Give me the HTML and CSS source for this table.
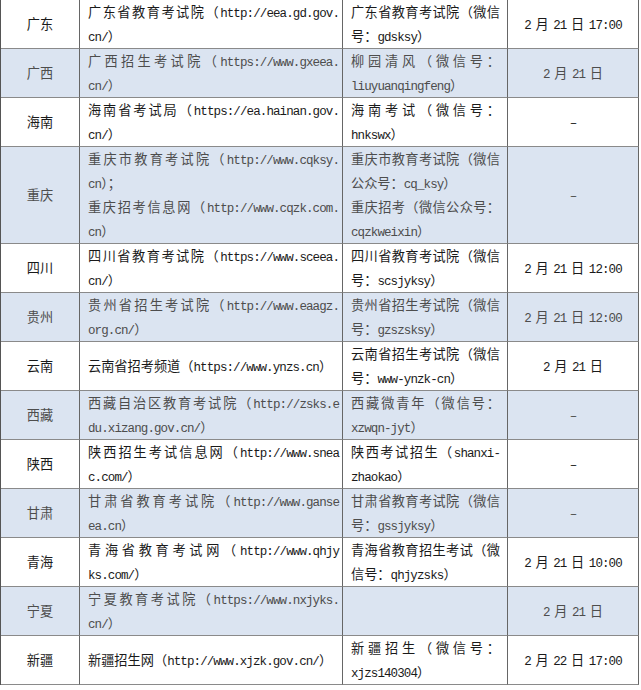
FILE: index.html
```html
<!DOCTYPE html>
<html lang="zh-CN">
<head>
<meta charset="utf-8">
<title>各省招生考试信息</title>
<link rel="stylesheet" href="styles.css">
</head>
<body>
<div class="tbl">
  <div class="row">
    <div class="c c1"><span class="ln">广东</span></div>
    <div class="c c2"><span class="ln j">广东省教育考试院（<span class="e">http://eea.gd.gov.</span></span><span class="ln"><span class="e">cn/</span>）</span></div>
    <div class="c c3"><span class="ln j">广东省教育考试院（微信</span><span class="ln">号：<span class="e">gdsksy</span>）</span></div>
    <div class="c c4"><span class="ln d"><span class="e">2 </span>月<span class="e"> 21 </span>日<span class="e"> 17:00</span></span></div>
  </div>
  <div class="row alt">
    <div class="c c1"><span class="ln">广西</span></div>
    <div class="c c2"><span class="ln j">广西招生考试院（<span class="e">https://www.gxeea.</span></span><span class="ln"><span class="e">cn/</span>）</span></div>
    <div class="c c3"><span class="ln j">柳园清风（微信号：</span><span class="ln"><span class="e">liuyuanqingfeng</span>）</span></div>
    <div class="c c4"><span class="ln d"><span class="e">2 </span>月<span class="e"> 21 </span>日</span></div>
  </div>
  <div class="row">
    <div class="c c1"><span class="ln">海南</span></div>
    <div class="c c2"><span class="ln j">海南省考试局（<span class="e">https://ea.hainan.gov.</span></span><span class="ln"><span class="e">cn/</span>）</span></div>
    <div class="c c3"><span class="ln j">海南考试（微信号：</span><span class="ln"><span class="e">hnkswx</span>）</span></div>
    <div class="c c4"><span class="ln"><span class="e">–</span></span></div>
  </div>
  <div class="row alt">
    <div class="c c1"><span class="ln">重庆</span></div>
    <div class="c c2"><span class="ln j">重庆市教育考试院（<span class="e">http://www.cqksy.</span></span><span class="ln"><span class="e">cn</span>）；</span><span class="ln j">重庆招考信息网（<span class="e">http://www.cqzk.com.</span></span><span class="ln"><span class="e">cn</span>）</span></div>
    <div class="c c3"><span class="ln j">重庆市教育考试院（微信</span><span class="ln">公众号：<span class="e">cq_ksy</span>）</span><span class="ln j">重庆招考（微信公众号：</span><span class="ln"><span class="e">cqzkweixin</span>）</span></div>
    <div class="c c4"><span class="ln"><span class="e">–</span></span></div>
  </div>
  <div class="row">
    <div class="c c1"><span class="ln">四川</span></div>
    <div class="c c2"><span class="ln j">四川省教育考试院（<span class="e">https://www.sceea.</span></span><span class="ln"><span class="e">cn/</span>）</span></div>
    <div class="c c3"><span class="ln j">四川省教育考试院（微信</span><span class="ln">号：<span class="e">scsjyksy</span>）</span></div>
    <div class="c c4"><span class="ln d"><span class="e">2 </span>月<span class="e"> 21 </span>日<span class="e"> 12:00</span></span></div>
  </div>
  <div class="row alt">
    <div class="c c1"><span class="ln">贵州</span></div>
    <div class="c c2"><span class="ln j">贵州省招生考试院（<span class="e">http://www.eaagz.</span></span><span class="ln"><span class="e">org.cn/</span>）</span></div>
    <div class="c c3"><span class="ln j">贵州省招生考试院（微信</span><span class="ln">号：<span class="e">gzszsksy</span>）</span></div>
    <div class="c c4"><span class="ln d"><span class="e">2 </span>月<span class="e"> 21 </span>日<span class="e"> 12:00</span></span></div>
  </div>
  <div class="row">
    <div class="c c1"><span class="ln">云南</span></div>
    <div class="c c2"><span class="ln">云南省招考频道（<span class="e">https://www.ynzs.cn</span>）</span></div>
    <div class="c c3"><span class="ln j">云南省招生考试院（微信</span><span class="ln">号：<span class="e">www-ynzk-cn</span>）</span></div>
    <div class="c c4"><span class="ln d"><span class="e">2 </span>月<span class="e"> 21 </span>日</span></div>
  </div>
  <div class="row alt">
    <div class="c c1"><span class="ln">西藏</span></div>
    <div class="c c2"><span class="ln j">西藏自治区教育考试院（<span class="e">http://zsks.e</span></span><span class="ln"><span class="e">du.xizang.gov.cn/</span>）</span></div>
    <div class="c c3"><span class="ln j">西藏微青年（微信号：</span><span class="ln"><span class="e">xzwqn-jyt</span>）</span></div>
    <div class="c c4"><span class="ln"><span class="e">–</span></span></div>
  </div>
  <div class="row">
    <div class="c c1"><span class="ln">陕西</span></div>
    <div class="c c2"><span class="ln j">陕西招生考试信息网（<span class="e">http://www.snea</span></span><span class="ln"><span class="e">c.com/</span>）</span></div>
    <div class="c c3"><span class="ln j">陕西考试招生（<span class="e">shanxi-</span></span><span class="ln"><span class="e">zhaokao</span>）</span></div>
    <div class="c c4"><span class="ln"><span class="e">–</span></span></div>
  </div>
  <div class="row alt">
    <div class="c c1"><span class="ln">甘肃</span></div>
    <div class="c c2"><span class="ln j">甘肃省教育考试院（<span class="e">http://www.ganse</span></span><span class="ln"><span class="e">ea.cn</span>）</span></div>
    <div class="c c3"><span class="ln j">甘肃省教育考试院（微信</span><span class="ln">号：<span class="e">gssjyksy</span>）</span></div>
    <div class="c c4"><span class="ln"><span class="e">–</span></span></div>
  </div>
  <div class="row">
    <div class="c c1"><span class="ln">青海</span></div>
    <div class="c c2"><span class="ln j">青海省教育考试网（<span class="e">http://www.qhjy</span></span><span class="ln"><span class="e">ks.com/</span>）</span></div>
    <div class="c c3"><span class="ln j">青海省教育招生考试（微</span><span class="ln">信号：<span class="e">qhjyzsks</span>）</span></div>
    <div class="c c4"><span class="ln d"><span class="e">2 </span>月<span class="e"> 21 </span>日<span class="e"> 10:00</span></span></div>
  </div>
  <div class="row alt">
    <div class="c c1"><span class="ln">宁夏</span></div>
    <div class="c c2"><span class="ln j">宁夏教育考试院（<span class="e">https://www.nxjyks.</span></span><span class="ln"><span class="e">cn/</span>）</span></div>
    <div class="c c3"></div>
    <div class="c c4"><span class="ln d"><span class="e">2 </span>月<span class="e"> 21 </span>日</span></div>
  </div>
  <div class="row">
    <div class="c c1"><span class="ln">新疆</span></div>
    <div class="c c2"><span class="ln">新疆招生网（<span class="e">http://www.xjzk.gov.cn/</span>）</span></div>
    <div class="c c3"><span class="ln j">新疆招生（微信号：</span><span class="ln"><span class="e">xjzs140304</span>）</span></div>
    <div class="c c4"><span class="ln d"><span class="e">2 </span>月<span class="e"> 22 </span>日<span class="e"> 17:00</span></span></div>
  </div>
</div>
</body>
</html>
```
FILE: styles.css
```css
* { box-sizing: border-box; }
body {
  margin: 0;
  background: #fff;
  font-family: "Noto Sans CJK SC", sans-serif;
  font-size: 13.2px;
  line-height: 24px;
  color: #1a1a1a;
}
.tbl {
  width: 639px;
  border-left: 1px solid #555;
}
.row {
  display: grid;
  grid-template-columns: 79px 263px 165px 131px;
}
.row.alt {
  background: #dbe4f1;
  color: #4d4d4d;
}
.c {
  border-right: 1px solid #666;
  border-bottom: 1px solid #8a8a8a;
  display: flex;
  flex-direction: column;
  justify-content: center;
  min-height: 49px;
}
.c1, .c4 {
  align-items: center;
  text-align: center;
}
.c2 { padding: 0 3px 0 8px; }
.c3 { padding: 0 7px 0 8px; }
.ln {
  display: block;
  white-space: nowrap;
}
.j {
  text-align: justify;
  text-align-last: justify;
}
.e {
  font-family: "Liberation Mono", monospace;
  font-size: 12.5px;
  letter-spacing: -0.9px;
  line-height: 1;
}
.d { word-spacing: -2px; white-space: pre; }
```
